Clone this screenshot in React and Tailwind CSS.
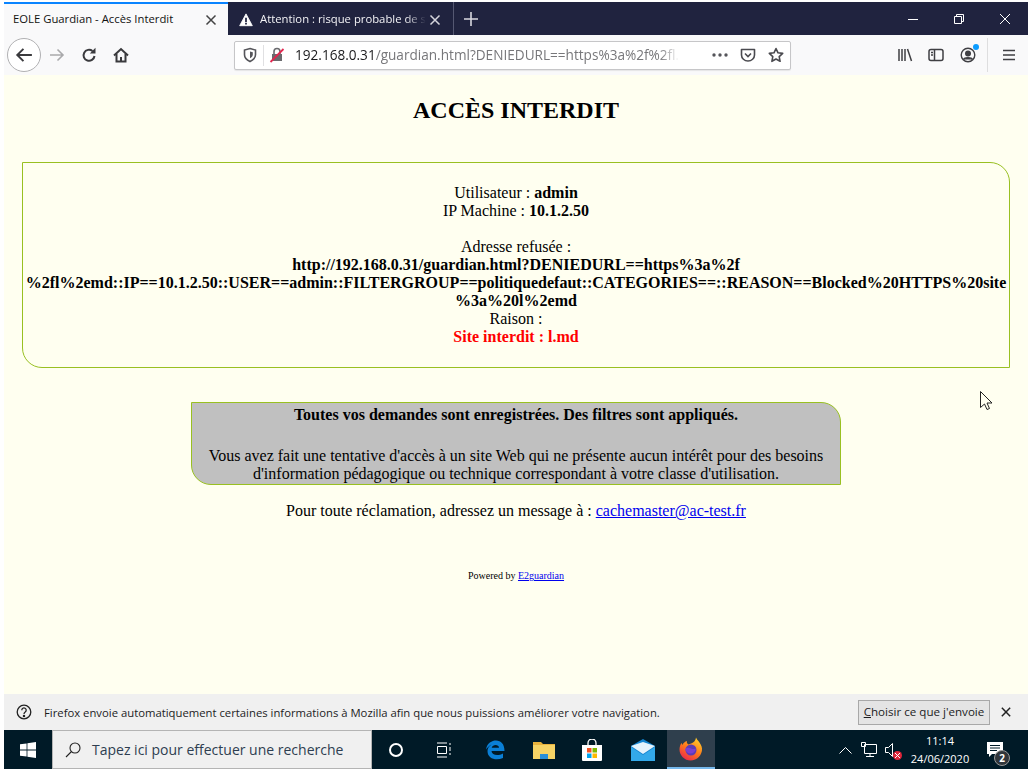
const ui = { fontFamily: '"Open Sans", "Noto Sans", sans-serif' };

const Chrome = ({ children, className = '' }) => (
  <svg viewBox="0 0 16 16" fill="none" stroke="currentColor" strokeWidth="2" className={`w-4 h-4 shrink-0 ${className}`}>{children}</svg>
);

function TabBar() {
  return (
    <div className="h-[33px] bg-[#20233f] flex shrink-0 text-[11.3px]" style={ui}>
      <div className="w-[224px] bg-[#f9f9fa] border-t-2 border-[#0a84ff] flex items-center pl-[9px] pr-[11px] text-[#111]">
        <span className="flex-1 whitespace-nowrap">EOLE Guardian - Accès Interdit</span>
        <svg viewBox="0 0 12 12" className="w-3 h-3 text-[#444]" stroke="currentColor" strokeWidth="1.5"><path d="M1.5 1.5l9 9M10.5 1.5l-9 9" /></svg>
      </div>
      <div className="w-[226px] border-r border-[#555872] flex items-center pt-[2px] pl-[11px] pr-[12px] text-[#f2f2f5]">
        <svg viewBox="0 0 16 16" className="w-[14px] h-[14px] shrink-0 mr-[7px]"><path d="M8 1l7.2 13.5H.8z" fill="#fff" stroke="#fff" strokeLinejoin="round" /><path d="M7 5.5h2v5H7zM7 11.3h2v1.8H7z" fill="#20233f" /></svg>
        <span className="whitespace-nowrap [mask-image:linear-gradient(to_right,black_88%,transparent)]">Attention : risque probable de s</span>
        <div className="flex-1" />
        <svg viewBox="0 0 12 12" className="w-3 h-3 shrink-0 text-[#d5d5dc]" stroke="currentColor" strokeWidth="1.5"><path d="M1.5 1.5l9 9M10.5 1.5l-9 9" /></svg>
      </div>
      <div className="w-[33px] flex items-center justify-center">
        <svg viewBox="0 0 14 14" className="w-[14px] h-[14px] text-[#d8d8df]" stroke="currentColor" strokeWidth="1.6"><path d="M7 0v14M0 7h14" /></svg>
      </div>
      <div className="flex-1" />
      <div className="flex text-white items-center">
        <div className="w-[46px] flex justify-center"><svg width="10" height="10" stroke="currentColor"><path d="M0 5.5h10" /></svg></div>
        <div className="w-[46px] flex justify-center"><svg width="10" height="10" fill="none" stroke="currentColor"><path d="M.5 2.5h7v7h-7zM2.5 2.5v-2h7v7h-2" /></svg></div>
        <div className="w-[46px] flex justify-center"><svg width="10" height="10" stroke="currentColor"><path d="M0 0l10 10M10 0L0 10" /></svg></div>
      </div>
    </div>
  );
}

function NavBar() {
  return (
    <div className="h-[40px] bg-[#f9f9fa] flex items-center shrink-0 text-[#3a3a3d]" style={ui}>
      <div className="w-[34px] h-[34px] ml-[3px] rounded-full border border-[#b1b1b3] bg-white flex items-center justify-center">
        <svg viewBox="0 0 16 16" className="w-[18px] h-[18px]" fill="none" stroke="#3a3a3d" strokeWidth="1.7"><path d="M15 8H2M7.5 2.5L2 8l5.5 5.5" /></svg>
      </div>
      <svg viewBox="0 0 16 16" className="w-4 h-4 ml-2" fill="none" stroke="#a9a9ab" strokeWidth="1.6"><path d="M1 8h13M8.5 2.5L14 8l-5.5 5.5" /></svg>
      <Chrome className="ml-4"><path d="M13.5 9A5.5 5.5 0 1 1 11.5 4" /><path d="M14.5 .8V6.500H8.800z" fill="currentColor" stroke="none" /></Chrome>
      <Chrome className="ml-4"><path d="M1 8.5L8 2l7 6.5" /><path d="M3.500 7v7.500h9V7" /><path d="M8 14.500V10" /></Chrome>
      <div className="w-[557px] h-[29px] ml-[105px] bg-white border border-[#c6c6c8] rounded-[2px] flex items-center shadow-[0_1px_1px_rgba(0,0,0,0.08)]">
        <svg viewBox="0 0 16 16" className="w-4 h-4 ml-[7px] shrink-0" fill="none" stroke="#55555a" strokeWidth="1.6"><path d="M8 1.500l5.500 1.600v4.600c0 3-2.400 5.300-5.500 6.800-3.100-1.500-5.500-3.800-5.500-6.800V3.100z" /><path d="M8 4.500l2.800.8v2.400c0 1.500-1.200 2.700-2.800 3.500z" fill="#55555a" stroke="none" /></svg>
        <div className="w-px h-[21px] bg-[#e0e0e2] ml-[5px]" />
        <svg viewBox="0 0 16 16" className="w-4 h-4 ml-[5px] shrink-0"><path d="M3 7h10v7H3z" fill="#6a6a6e" /><path d="M5 7V4.500a3 3 0 0 1 6 0V7" fill="none" stroke="#6a6a6e" strokeWidth="1.6" /><path d="M1.500 15L14.500 2" stroke="#e22850" strokeWidth="1.8" /></svg>
        <div className="ml-[10px] text-[13.6px] whitespace-nowrap [mask-image:linear-gradient(to_right,black_95%,transparent)]">
          <span className="text-[#1a1a1c]">192.168.0.31</span><span className="text-[#77777a]">/guardian.html?DENIEDURL==https%3a%2f%2fl.</span>
        </div>
        <div className="flex-1" />
        <svg width="16" height="4" viewBox="0 0 16 4" className="mr-[12px] shrink-0" fill="#55555a"><circle cx="2" cy="2" r="1.7" /><circle cx="8" cy="2" r="1.7" /><circle cx="14" cy="2" r="1.7" /></svg>
        <svg viewBox="0 0 16 16" className="w-4 h-4 mr-[12px] shrink-0" fill="none" stroke="#4a4a4f" strokeWidth="1.6"><path d="M1.500 2.500h13v5.500a6.500 6 0 0 1-13 0z" strokeLinejoin="round" /><path d="M5 6.500l3 3 3-3" /></svg>
        <svg viewBox="0 0 16 16" className="w-4 h-4 mr-[6px] shrink-0" fill="none" stroke="#4a4a4f" strokeWidth="1.6"><path d="M8 1.500l2 4.300 4.700.6-3.500 3.200.9 4.700L8 12l-4.100 2.300.9-4.700L1.300 6.400 6 5.800z" strokeLinejoin="round" /></svg>
      </div>
      <div className="flex-1" />
      <svg viewBox="0 0 16 16" className="w-4 h-4 mr-[15px]" fill="none" stroke="#3f3f43" strokeWidth="1.5"><path d="M2 2v12M5 2v12M8 2v12M10.500 2l4 12" /></svg>
      <svg viewBox="0 0 16 16" className="w-4 h-4 mr-[16px]" fill="none" stroke="#3f3f43" strokeWidth="1.5"><rect x="1" y="2.500" width="14" height="11" rx="2" /><path d="M6.500 2.500v11M3 5.500h2M3 8h2" /></svg>
      <div className="relative w-4 h-4 mr-[11px]">
        <svg viewBox="0 0 16 16" className="w-4 h-4" fill="none" stroke="#3f3f43" strokeWidth="1.4"><circle cx="8" cy="8" r="6.800" /><circle cx="8" cy="6.500" r="2.300" fill="#3f3f43" /><path d="M3.500 12.500c1-2.500 8-2.500 9 0" fill="#3f3f43" /></svg>
        <span className="absolute -top-[3px] -right-[3px] w-[6px] h-[6px] rounded-full bg-[#0a9cff]" />
      </div>
      <div className="w-px h-[34px] bg-[#dededf]" />
      <svg viewBox="0 0 14 14" className="w-[14px] h-[14px] ml-[14px] mr-[12px]" stroke="#3f3f43" strokeWidth="1.5"><path d="M1 2.500h12M1 7h12M1 11.500h12" /></svg>
    </div>
  );
}

function Page() {
  return (
    <div className="flex-1 min-h-0 relative bg-[#fffff0] text-black text-center text-base leading-[18px]" style={{ fontFamily: '"Liberation Serif", serif' }}>
      <h1 className="text-2xl font-bold leading-[28px] pt-[21px]">ACCÈS INTERDIT</h1>
      <div className="mx-[18px] mt-[38px] h-[206px] border border-[#99c021] rounded-tr-[20px] rounded-bl-[20px] pt-[21px]">
        Utilisateur : <b>admin</b><br />
        IP Machine : <b>10.1.2.50</b><br />
        <br />
        Adresse refusée :<br />
        <b>http://192.168.0.31/guardian.html?DENIEDURL==https%3a%2f<br />
          %2fl%2emd::IP==10.1.2.50::USER==admin::FILTERGROUP==politiquedefaut::CATEGORIES==::REASON==Blocked%20HTTPS%20site<br />
          %3a%20l%2emd</b><br />
        Raison :<br />
        <b className="text-[#ff0000]">Site interdit : l.md</b>
      </div>
      <div className="w-[650px] h-[83px] mx-auto mt-[34px] bg-[#c0c0c0] border border-[#99c021] rounded-tr-[20px] rounded-bl-[20px] pt-[3px]">
        <b>Toutes vos demandes sont enregistrées. Des filtres sont appliqués.</b>
        <p className="mt-[23px]">Vous avez fait une tentative d'accès à un site Web qui ne présente aucun intérêt pour des besoins<br />d'information pédagogique ou technique correspondant à votre classe d'utilisation.</p>
      </div>
      <p className="mt-[17px]">Pour toute réclamation, adressez un message à : <a className="text-[#0000ee] underline">cachemaster@ac-test.fr</a></p>
      <p className="mt-[47px] text-[10px]">Powered by <a className="text-[#0000ee] underline">E2guardian</a></p>
      <svg viewBox="0 0 12 19" className="absolute left-[976px] top-[316px] w-[12px] h-[19px]"><path d="M.5.5v16l4-3.500 2.500 5.500 2.500-1-2.500-5.500h5z" fill="#fffff0" stroke="#222" strokeWidth="1" /></svg>
    </div>
  );
}

function NoticeBar() {
  return (
    <div className="h-[36px] bg-[#f0f0f0] flex items-center shrink-0 text-[11.3px] text-[#1c1c1e]" style={ui}>
      <svg viewBox="0 0 16 16" className="w-4 h-4 ml-3 shrink-0" fill="none" stroke="#222" strokeWidth="1.3"><circle cx="8" cy="8" r="6.800" /><path d="M5.800 6.200a2.200 2.200 0 1 1 3.400 1.800C8.300 8.600 8 9 8 10" /><circle cx="8" cy="12" r=".6" fill="#222" /></svg>
      <span className="ml-3 pt-[2px] whitespace-nowrap">Firefox envoie automatiquement certaines informations à Mozilla afin que nous puissions améliorer votre navigation.</span>
      <div className="flex-1" />
      <div className="w-[132px] h-[25px] border border-[#a8a8a8] bg-[#e4e4e4] flex items-center justify-center whitespace-nowrap text-[11.6px]"><span><span className="underline">C</span>hoisir ce que j'envoie</span></div>
      <svg viewBox="0 0 12 12" className="w-[10px] h-[10px] ml-[11px] mr-[17px]" stroke="#222" strokeWidth="1.8"><path d="M1 1l10 10M11 1L1 11" /></svg>
    </div>
  );
}

function Taskbar() {
  return (
    <div className="h-[39px] bg-[#001a27] flex items-center shrink-0 text-white" style={ui}>
      <div className="w-[48px] flex justify-center">
        <svg viewBox="0 0 16 16" className="w-4 h-4" fill="#fff"><path d="M0 2.300l6.600-.9v6.200H0zM7.400 1.300L16 0v7.600H7.400zM0 8.400h6.600v6.200L0 13.700zM7.400 8.400H16V16l-8.600-1.200z" /></svg>
      </div>
      <div className="w-[320px] h-full bg-[#f0f0f0] border border-[#b4b4b4] flex items-center text-[#2e3e50] text-sm">
        <svg viewBox="0 0 16 16" className="w-4 h-4 ml-[12px] shrink-0" fill="none" stroke="#222" strokeWidth="1.1"><circle cx="10" cy="6" r="5" /><path d="M6.500 9.500L1 15" /></svg>
        <span className="ml-[11px] whitespace-nowrap">Tapez ici pour effectuer une recherche</span>
      </div>
      <div className="w-[48px] flex justify-center"><div className="w-[14px] h-[14px] rounded-full border-2 border-white" /></div>
      <div className="w-[48px] flex justify-center">
        <svg viewBox="0 0 16 16" className="w-4 h-4" fill="none" stroke="#fff"><path d="M1 1h10M1 15h10M1.500 4.500h9v7h-9zM14 1v2M14 5v4M14 11v2" /></svg>
      </div>
      <div className="w-[54px] flex justify-center">
        <svg viewBox="0 0 20 20" className="w-5 h-5"><path d="M1 9.500C2 3 7 .5 11 .5c5 0 8.500 3.500 8.500 10.500H6.500c.3 4 6 5.500 11.500 2.500v4.500c-7 3-15.500.8-15.500-7 0-2.500 1.200-4.500 4-6.500C4.500 5.500 3 7 1 9.500zM6.700 7.700h7.300c0-3.500-6.500-3.500-7.300 0z" fill="#0a7fd6" /></svg>
      </div>
      <div className="w-[43px] flex justify-center">
        <svg viewBox="0 0 22 18" className="w-[22px] h-[18px]"><path d="M0 1h8l2 2h12v15H0z" fill="#e8b23c" /><path d="M0 4h22v14H0z" fill="#f6d365" /><path d="M7 13h8v5H7z" fill="#2a8fd8" /></svg>
      </div>
      <div className="w-[54px] flex justify-center">
        <svg viewBox="0 0 22 22" className="w-[22px] h-[22px]"><path d="M1 6h20v15a1 1 0 0 1-1 1H2a1 1 0 0 1-1-1z" fill="#fff" /><path d="M7 6V4a4 4 0 0 1 8 0v2" fill="none" stroke="#fff" strokeWidth="1.3" /><path d="M6 9h4.500v4.500H6z" fill="#f25022" /><path d="M11.500 9H16v4.500h-4.500z" fill="#7fba00" /><path d="M6 14.500h4.500V19H6z" fill="#00a4ef" /><path d="M11.500 14.500H16V19h-4.500z" fill="#ffb900" /></svg>
      </div>
      <div className="w-[48px] flex justify-center">
        <svg viewBox="0 0 24 22" className="w-6 h-[22px]"><path d="M0 7L12 0l12 7v15H0z" fill="#1384d0" /><path d="M0 7l12 8 12-8-12-4z" fill="#e4f3fc" /><path d="M0 8l12 8 12-8v14H0z" fill="#33a9ea" /></svg>
      </div>
      <div className="w-[48px] h-full bg-[#2f3f4d] border-b-2 border-[#76b9ed] flex justify-center items-center">
        <svg viewBox="0 0 24 24" className="w-6 h-6">
          <defs><linearGradient id="fx" x1="0.8" y1="0" x2="0.2" y2="1"><stop offset="0" stopColor="#ffd12e" /><stop offset=".5" stopColor="#ff7a1a" /><stop offset="1" stopColor="#e8234f" /></linearGradient></defs>
          <path d="M17 .5c1 3 5.500 5.500 6 11 .4 6.500-5 12-11.500 12C5.500 23.500.5 18.500.5 12.500c0-2.500.8-5 2-6.500l1 2c.8-2 2.500-3.500 4.500-4-.5 1.500 0 2.500 1.500 3.500C13 6.500 16.500 5 17 .5z" fill="url(#fx)" />
          <circle cx="12" cy="13" r="5.500" fill="#5b3bb5" />
          <path d="M6 12c2-2 4-1.500 6-.5 1.500.8 4 .8 5 0-.5 3-3 5-5.500 5-2.500 0-5-2-5.500-4.500z" fill="#7a3fd0" />
        </svg>
      </div>
      <div className="flex-1" />
      <svg viewBox="0 0 13 8" className="w-[13px] h-2 mr-[9px]" fill="none" stroke="#fff"><path d="M.5 7.500l6-6 6 6" /></svg>
      <svg viewBox="0 0 16 16" className="w-4 h-4 mr-[8px]" fill="none" stroke="#fff"><path d="M3.500 2.500h12v9h-12zM9 11.500V14M5 14.500h8M.5.500h4v4h-4z" /></svg>
      <div className="relative w-4 h-4 mr-[9px]">
        <svg viewBox="0 0 16 16" className="w-4 h-4" fill="none" stroke="#fff"><path d="M.5 5.500h3l4-4v13l-4-4h-3z" /></svg>
        <span className="absolute -bottom-[2px] -right-[1px] w-[9px] h-[9px] rounded-full bg-[#e0263b] flex items-center justify-center">
          <svg width="5" height="5" stroke="#fff"><path d="M0 0l5 5M5 0L0 5" /></svg>
        </span>
      </div>
      <div className="w-[60px] text-center text-[11px] leading-[18px] whitespace-nowrap">11:14<br />24/06/2020</div>
      <div className="relative w-[16px] h-[16px] ml-[17px] mr-[25px]">
        <svg viewBox="0 0 16 16" className="w-4 h-4" fill="#fff"><path d="M0 0h16v12H5l-3 3v-3H0z" /><path d="M3 3.500h10M3 6h10M3 8.500h7" stroke="#001a27" /></svg>
        <span className="absolute -bottom-[8px] -right-[7px] w-4 h-4 rounded-full bg-[#30353a] border border-[#999] text-[10px] leading-[14px] text-center font-bold">2</span>
      </div>
    </div>
  );
}

export default function App() {
  return (
    <div className="w-[1030px] h-[773px] bg-white pt-[2px] pl-[4px] pr-[2px] pb-[4px] flex flex-col overflow-hidden">
      <TabBar />
      <NavBar />
      <Page />
      <NoticeBar />
      <Taskbar />
    </div>
  );
}
